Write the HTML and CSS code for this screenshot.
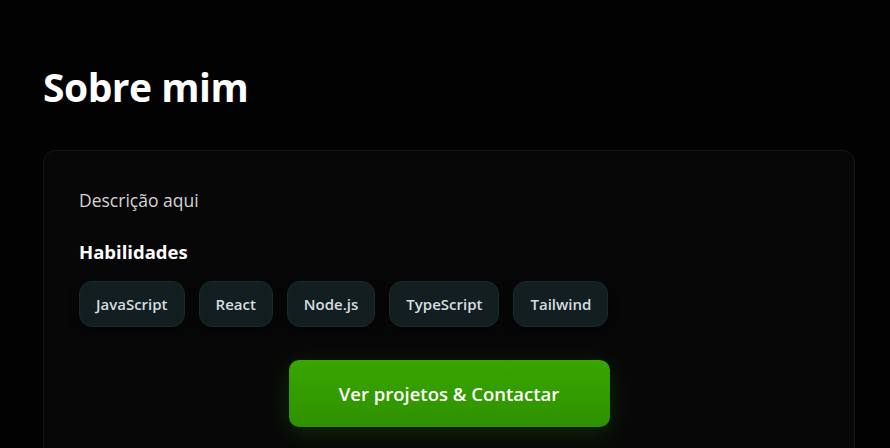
FILE: index.html
```html
<!DOCTYPE html>
<html lang="pt">
<head>
<meta charset="utf-8">
<link rel="stylesheet" href="styles.css">
</head>
<body>
<section class="about">
  <h1 class="title">Sobre mim</h1>
  <div class="card">
    <p class="desc">Descrição aqui</p>
    <h2 class="skills-title">Habilidades</h2>
    <ul class="chips">
      <li class="chip">JavaScript</li>
      <li class="chip">React</li>
      <li class="chip">Node.js</li>
      <li class="chip">TypeScript</li>
      <li class="chip">Tailwind</li>
    </ul>
    <div class="actions">
      <a class="cta" href="#">Ver projetos &amp; Contactar</a>
    </div>
  </div>
</section>
</body>
</html>
```

FILE: styles.css
```css
* { box-sizing: border-box; }
html, body { margin: 0; padding: 0; background: #020202; }
body {
  font-family: "Open Sans", "Noto Sans", sans-serif;
  color: #fff;
  overflow: hidden;
  height: 448px;
}
.about {
  padding: 58px 35px 0 43px;
}
.title {
  margin: 0;
  font-size: 39px;
  font-weight: 700;
  line-height: 58px;
  letter-spacing: -0.5px;
}
.card {
  margin-top: 34px;
  background: #070707;
  border: 1px solid #161616;
  border-radius: 12px;
  padding: 34px 35px 40px;
  height: 320px;
}
.desc {
  margin: 0;
  font-size: 17.5px;
  line-height: 30px;
  color: #d4d4d4;
}
.skills-title {
  margin: 22px 0 0;
  font-size: 18.5px;
  font-weight: 700;
  line-height: 30px;
  color: #fff;
}
.chips {
  list-style: none;
  margin: 14px 0 0;
  padding: 0;
  display: flex;
  gap: 14px;
}
.chip {
  height: 46px;
  padding: 0 16px;
  display: flex;
  align-items: center;
  background: #121e20;
  border: 1px solid #1c2a2c;
  border-radius: 13px;
  font-size: 15px;
  font-weight: 600;
  color: #d6dde0;
  box-shadow: 0 4px 10px rgba(0,0,0,0.5);
}
.actions {
  display: flex;
  justify-content: center;
  margin-top: 33px;
}
.cta {
  width: 321px;
  height: 67px;
  display: flex;
  align-items: center;
  justify-content: center;
  border-radius: 10px;
  background: linear-gradient(180deg, #38a600 0%, #2f9100 100%);
  color: #fff;
  text-decoration: none;
  font-size: 18.5px;
  font-weight: 600;
  box-shadow: 0 6px 24px rgba(60, 170, 0, 0.22);
}
```
